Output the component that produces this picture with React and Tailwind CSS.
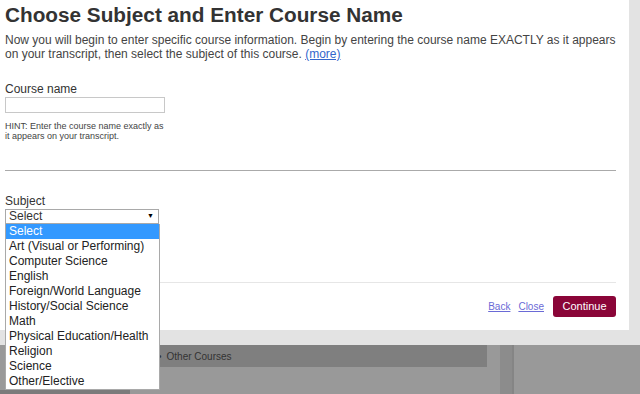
const SUBJECTS = [
  'Select',
  'Art (Visual or Performing)',
  'Computer Science',
  'English',
  'Foreign/World Language',
  'History/Social Science',
  'Math',
  'Physical Education/Health',
  'Religion',
  'Science',
  'Other/Elective',
]

export default function App() {
  return (
    <div className="relative w-[640px] h-[394px] overflow-hidden bg-[#999999] font-['Liberation_Sans',Arial,sans-serif] text-[#333]">
      {/* Modal with light gray frame */}
      <div className="h-[345px] bg-[#e3e3e3] flex">
        <div className="w-[629px] h-[330px] bg-white px-[5px] flex flex-col">
          <h1 className="text-[20.75px] font-bold leading-[24px] mt-[3px] text-[#333]">Choose Subject and Enter Course Name</h1>
          <p className="text-[12px] leading-[14px] mt-[6px] text-[#444]">
            Now you will begin to enter specific course information. Begin by entering the course name EXACTLY as it appears on your transcript, then select the subject of this course.{' '}
            <a className="text-[#3366cc] underline">(more)</a>
          </p>

          <label className="text-[12px] leading-[14px] mt-[21px]">Course name</label>
          <div className="mt-[1px] w-[160px] h-[16px] border border-[#c8c8c8]" />
          <p className="text-[9px] leading-[10px] mt-[8px] w-[165px] text-[#444]">
            HINT: Enter the course name exactly as it appears on your transcript.
          </p>

          <div className="mt-[29px] mr-[8px] border-t border-[#aaa]" />

          <label className="text-[12px] leading-[14px] mt-[23px]">Subject</label>
          <div className="mt-[1px] w-[154px] h-[15px] border border-[#a9a9a9] flex items-center justify-between pl-[3px] pr-[4px]">
            <span className="text-[12px] leading-[13px]">Select</span>
            <span className="text-[7px] text-black">▼</span>
          </div>

          <div className="mt-[58px] mr-[8px] border-t border-[#e6e6e6]" />
          <div className="flex justify-end items-center gap-[8px] mr-[8px] mt-[13px]">
            <a className="text-[10px] text-[#6a6ad6] underline">Back</a>
            <a className="text-[10px] text-[#6a6ad6] underline">Close</a>
            <button className="ml-[1px] w-[63px] h-[21px] rounded-[3px] bg-[#8a0538] text-white text-[11px]">Continue</button>
          </div>
        </div>
      </div>

      {/* Page behind the modal */}
      <div className="flex h-[49px]">
        <div className="w-[130px] flex flex-col">
          <div className="h-[22px] bg-[#999999]" />
          <div className="h-[23px]" />
          <div className="h-[4px] bg-[#7b7b7b]" />
        </div>
        <div className="w-[357px] h-[22px] bg-[#7f7f7f] flex items-center pl-[28px] text-[10px] text-[#333]">
          <span className="mr-[5px]">•</span>Other Courses
        </div>
        <div className="w-[13px]" />
        <div className="w-[14px] bg-[#8c8c8c] border-r-2 border-[#858585]" />
      </div>

      {/* Open select list, overlays the page */}
      <ul className="absolute left-[5px] top-[224px] w-[155px] bg-white border border-[#a9a9a9] border-t-0 text-[12px] text-[#222]">
        {SUBJECTS.map((s, i) => (
          <li key={s} className={`h-[15px] leading-[15px] pl-[3px] ${i === 0 ? 'bg-[#3399ff] text-white' : ''}`}>{s}</li>
        ))}
      </ul>
    </div>
  )
}
